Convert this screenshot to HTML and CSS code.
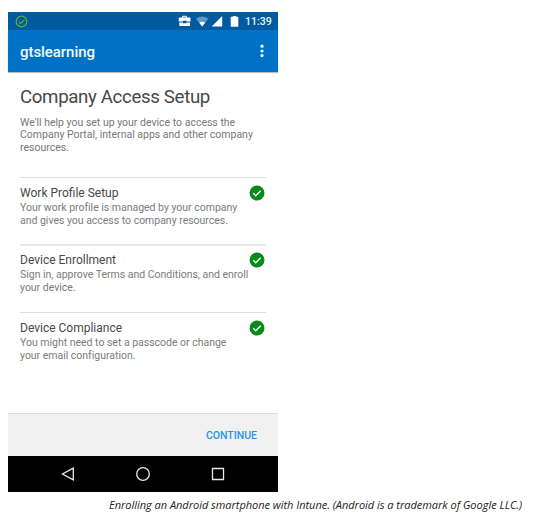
FILE: index.html
```html
<!DOCTYPE html>
<html lang="en">
<head>
<meta charset="utf-8">
<title>Company Access Setup</title>
<link rel="stylesheet" href="styles.css">
</head>
<body>
<figure class="figure">
  <div class="phone">
    <div class="status">
      <svg class="status-check" width="13" height="13" viewBox="0 0 13 13"><circle cx="6.5" cy="6.5" r="5.3"/><path d="M3.8 6.7l1.9 1.9 3.7-3.8"/></svg>
      <svg class="status-icons" width="62" height="14" viewBox="0 0 62 14">
        <path fill-rule="evenodd" d="M4 3.500V2.700L5 1.700h3l1 1v.8h2.700q.8 0 .8.8V7.500H8.500V6.800H5v.7H.7V4.300q0-.8.8-.8zm1.200 0h2.600v-.7H5.200zM1.200 8.500H5v.8h3.500v-.8h3.500v2.800q0 .8-.8.8H2q-.8 0-.8-.8z"/>
        <path class="dim" d="M18 4.700Q24.200.3 30.400 4.700L24.200 12.500z"/>
        <path d="M21.200 8.700Q24.200 7 27.200 8.700L24.200 12.500z"/>
        <path d="M44.200 2v10.500H33.700z"/>
        <path d="M53.200 2.800H55V1.900h3v.9h1.800q.5 0 .5.5v8.900q0 .5-.5.500h-6.600q-.5 0-.5-.5V3.300q0-.5.5-.5z"/>
      </svg>
      <span class="clock">11:39</span>
    </div>
    <header class="appbar">
      <span class="brand">gtslearning</span>
      <svg width="4" height="14" viewBox="0 0 4 14"><circle cx="2" cy="2.200" r="1.600"/><circle cx="2" cy="7" r="1.600"/><circle cx="2" cy="11.600" r="1.600"/></svg>
    </header>
    <main class="content">
      <h1 class="title">Company Access Setup</h1>
      <p class="intro">We'll help you set up your device to access the<br>Company Portal, internal apps and other company<br>resources.</p>
      <section class="step">
        <div><h2>Work Profile Setup</h2><p>Your work profile is managed by your company<br>and gives you access to company resources.</p></div>
        <svg class="done" width="16" height="16" viewBox="0 0 16 16"><circle cx="8" cy="8" r="7.500"/><path d="M4.300 8.300l2.400 2.400 5-5"/></svg>
      </section>
      <section class="step thick">
        <div><h2>Device Enrollment</h2><p>Sign in, approve Terms and Conditions, and enroll<br>your device.</p></div>
        <svg class="done" width="16" height="16" viewBox="0 0 16 16"><circle cx="8" cy="8" r="7.500"/><path d="M4.300 8.300l2.400 2.400 5-5"/></svg>
      </section>
      <section class="step">
        <div><h2>Device Compliance</h2><p>You might need to set a passcode or change<br>your email configuration.</p></div>
        <svg class="done" width="16" height="16" viewBox="0 0 16 16"><circle cx="8" cy="8" r="7.500"/><path d="M4.300 8.300l2.400 2.400 5-5"/></svg>
      </section>
    </main>
    <footer class="actions"><span class="continue">CONTINUE</span></footer>
    <nav class="navbar">
      <svg width="14" height="16" viewBox="0 0 14 16"><path d="M12.300 2.200v11.600L1.500 8z"/></svg>
      <svg width="16" height="16" viewBox="0 0 16 16"><circle cx="8" cy="8" r="6.300"/></svg>
      <svg width="14" height="16" viewBox="0 0 14 16"><path d="M1.500 2.500h11v11h-11z"/></svg>
    </nav>
  </div>
  <figcaption class="caption">Enrolling an Android smartphone with Intune. (Android is a trademark of Google LLC.)</figcaption>
</figure>
</body>
</html>
```
FILE: styles.css
```css
* { box-sizing: border-box; }
body { margin: 0; background: #fff; }
h1, h2, p { margin: 0; font-weight: 400; }
.figure { margin: 0; padding: 12px 0 0 8px; }
.phone {
  width: 270px;
  height: 480px;
  display: flex;
  flex-direction: column;
  font-family: Roboto, sans-serif;
  white-space: nowrap;
}
.status {
  flex: none;
  height: 18px;
  display: flex;
  align-items: center;
  padding: 0 6px 0 7px;
  background: #005a9f;
}
.status-check { fill: none; stroke: #58b12c; stroke-width: 1.2; }
.status-icons { margin-left: auto; fill: #fff; }
.dim { fill: #6397c3; }
.clock { width: 27px; margin-left: 5px; color: #edf5fb; font-size: 10.6px; font-weight: 500; line-height: 18px; padding-top: 1px; }
.appbar {
  flex: none;
  height: 42px;
  display: flex;
  align-items: center;
  justify-content: space-between;
  padding: 0 14px 0 12px;
  background: #0072c6;
  box-shadow: 0 1px 1px #bdbdbd;
  fill: #fff;
}
.brand { color: #f3f9fd; font-size: 15px; font-weight: 500; letter-spacing: -.05px; padding-top: 1px; }
.content { flex: 1; padding: 15px 12px 0; }
.title { height: 30px; color: #484848; font-size: 18.7px; line-height: 21px; letter-spacing: -.36px; }
.intro { height: 60px; color: #777; font-size: 10.5px; line-height: 12.4px; }
.step {
  height: 68px;
  display: flex;
  justify-content: space-between;
  padding-top: 7px;
  border-top: 1px solid #dcdcdc;
}
.step:first-of-type { height: 67px; }
.step > div { width: 229px; padding-top: 1px; }
.step h2 { color: #494949; font-size: 12px; line-height: 15px; }
.step p { margin-top: 1px; color: #7b7b7b; font-size: 10.5px; line-height: 12.6px; letter-spacing: -.015px; }
.thick { border-top: 2px solid #e9e9e9; padding-top: 6px; }
.done { flex: none; margin-right: 1px; fill: #078b18; }
.done path { fill: none; stroke: #fff; stroke-width: 1.5; }
.actions {
  flex: none;
  height: 43px;
  display: flex;
  align-items: center;
  justify-content: flex-end;
  padding-right: 21px;
  background: #f1f1f1;
  border-top: 1px solid #dcdcdc;
}
.continue { color: #2593eb; font-size: 10.5px; font-weight: 500; }
.navbar {
  flex: none;
  height: 36px;
  display: flex;
  align-items: center;
  justify-content: space-between;
  padding: 0 53px;
  background: #000;
  fill: none;
  stroke: #e8e8e8;
  stroke-width: 1.3;
}
.caption {
  margin: 5px 0 0 101px;
  color: #222;
  font: italic 11px/16px "Open Sans", sans-serif;
  letter-spacing: -.025px;
  white-space: nowrap;
}
```
